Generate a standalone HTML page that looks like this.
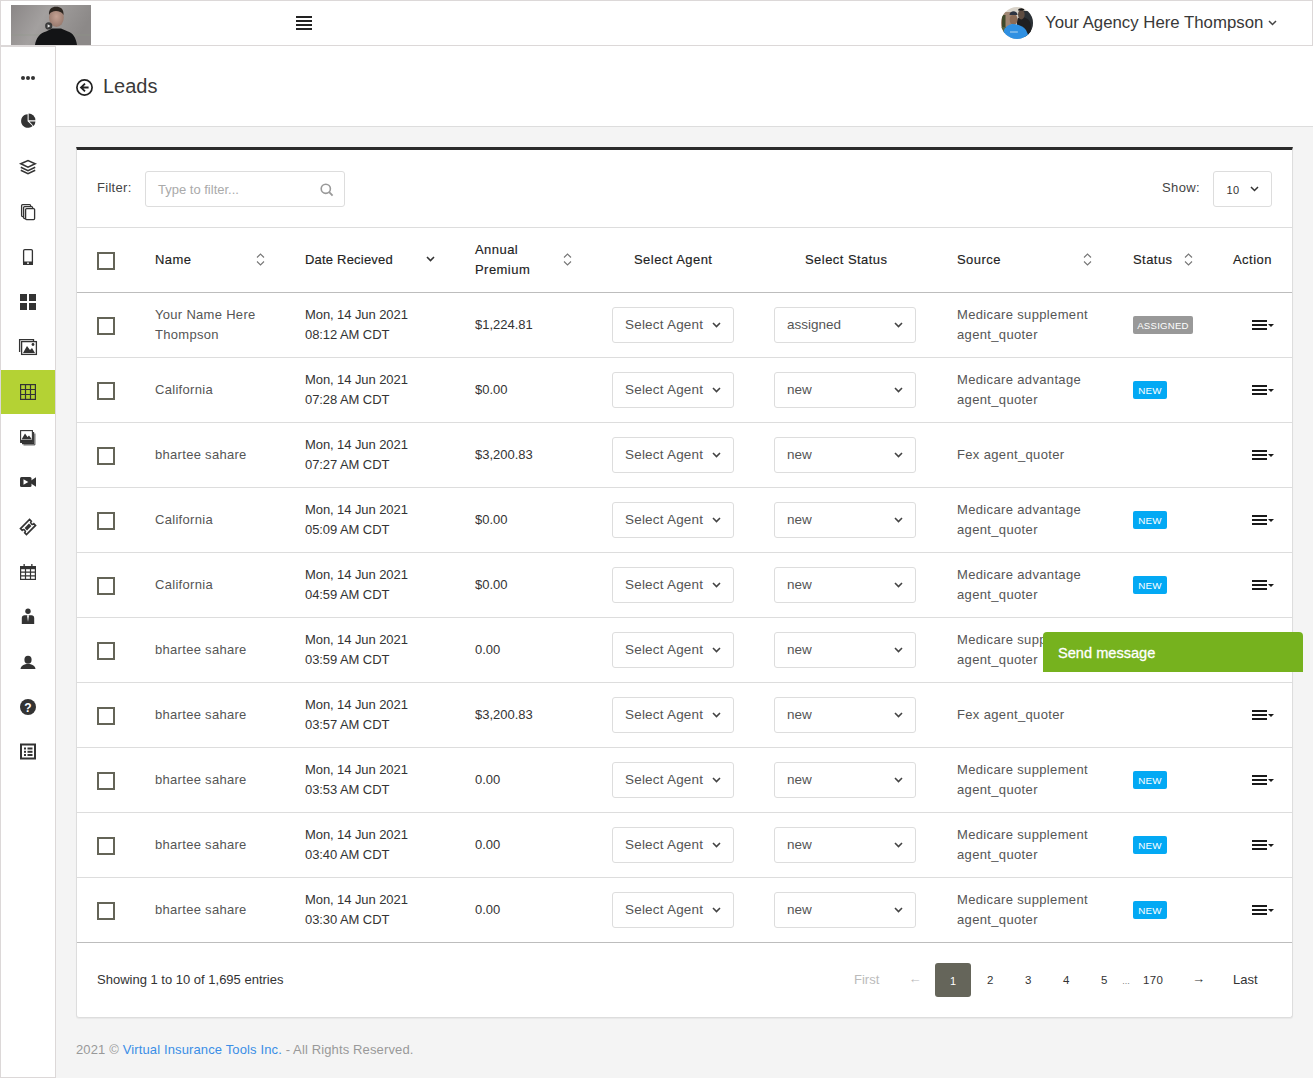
<!DOCTYPE html><html><head><meta charset="utf-8"><style>
*{box-sizing:border-box;margin:0;padding:0}
html,body{width:1313px;height:1078px;overflow:hidden}
body{background:#f4f4f4;font-family:"Liberation Sans",sans-serif;color:#333;position:relative;font-size:13px}
.a{position:absolute}
.t{position:absolute;white-space:nowrap;line-height:20px}
</style></head><body>
<div class="a" style="left:0;top:0;width:1313px;height:46px;background:#fff;border:1px solid #dcd8d8"></div>
<div class="a" style="left:0;top:46px;width:56px;height:1032px;background:#fff;border:1px solid #dcd8d8"></div>
<div class="a" style="left:1px;top:370px;width:54px;height:44px;background:#b4d234"></div>
<div class="a" style="left:56px;top:46px;width:1257px;height:81px;background:#fff;border-bottom:1px solid #ddd"></div>
<div class="a" style="left:76px;top:147px;width:1217px;height:871px;background:#fff;border:1px solid #ddd;border-top:3px solid #2b2b2b;border-radius:0 0 3px 3px;box-shadow:0 1px 1px rgba(0,0,0,.05)"></div>
<svg class="a" style="left:11px;top:5px" width="80" height="40" viewBox="0 0 80 40">
<defs><linearGradient id="lg" x1="0" x2="1" y1="0" y2="0.3"><stop offset="0" stop-color="#8a8686"/><stop offset=".45" stop-color="#a3a09f"/><stop offset="1" stop-color="#8c8988"/></linearGradient>
<radialGradient id="fc" cx=".5" cy=".45" r=".55"><stop offset="0" stop-color="#c4a193"/><stop offset="1" stop-color="#987a6e"/></radialGradient></defs>
<rect width="80" height="40" fill="url(#lg)"/>
<path d="M0 30 H80" stroke="#8f9a86" stroke-width="0.6" opacity=".6"/>
<path d="M24 40 C25 33 29 28 35 26.5 L41 23.5 L50 23.5 L57 26.5 C62 28 65 33 66 40 Z" fill="#131416"/>
<ellipse cx="45.4" cy="12.5" rx="7.4" ry="9.5" fill="url(#fc)"/>
<path d="M38 10 C37.5 4 41 1.8 45 1.8 C49.5 1.8 53 4 52.5 10 C51 7 48 6 45 6 C42 6 39.5 7 38 10Z" fill="#2c2520"/>
<circle cx="37.7" cy="20.9" r="3.6" fill="#3b3b3b"/><path d="M36.6 19.3 L39.4 21 L36.6 22.7Z" fill="#e6e6e6"/>
</svg>
<svg class="a" style="left:296px;top:16px" width="16" height="14"><rect y="0" width="16" height="2" fill="#222"/><rect y="4" width="16" height="2" fill="#222"/><rect y="8" width="16" height="2" fill="#222"/><rect y="12" width="16" height="2" fill="#222"/></svg>
<svg class="a" style="left:1001px;top:7px" width="32" height="32" viewBox="0 0 32 32">
<defs><clipPath id="av"><circle cx="16" cy="16" r="16"/></clipPath></defs>
<g clip-path="url(#av)"><rect width="32" height="32" fill="#d8d2c8"/>
<rect x="0" y="5" width="10" height="17" fill="#a08673"/>
<rect x="1" y="8" width="3.5" height="14" fill="#3f4a2a"/>
<rect x="0" y="20" width="10" height="6" fill="#5a6440"/>
<rect x="22" y="4" width="10" height="24" fill="#2a3035"/>
<path d="M16 30 V14 C16 11 18 10 20 10 C24 10 29 12 30 18 V30Z" fill="#1f1f21"/>
<ellipse cx="20.3" cy="7.5" rx="3.3" ry="5" fill="#5e4c40"/>
<path d="M17 3.5 C17 0.5 23.5 0.5 23.5 3.5Z" fill="#151515"/>
<ellipse cx="12.6" cy="12.5" rx="3.9" ry="5.5" fill="#8c6b55"/>
<path d="M8.5 8 C8.5 3 16.5 3 16.5 8 Z" fill="#2d3340"/>
<path d="M1 32 L3 23 C5 19 9 17 12 17 C16 17 22 19 25 23 L29 32Z" fill="#2f90e2"/>
<path d="M9 25 H17" stroke="#cfe4f5" stroke-width="1.2" opacity=".7"/>
</g></svg>
<div class="t" style="left:1045px;top:13px;font-size:16.8px;color:#383838;font-weight:400;line-height:20px;">Your Agency Here Thompson</div>
<svg class="a" style="left:1268px;top:20px" width="9" height="6"><path d="M1 1 L4.5 4.5 L8 1" stroke="#444" stroke-width="1.5" fill="none"/></svg>
<svg class="a" style="left:76px;top:79px" width="17" height="17" viewBox="0 0 17 17"><circle cx="8.5" cy="8.5" r="7.6" stroke="#222" stroke-width="1.7" fill="none"/><path d="M9 4.6 L5 8.5 L9 12.4 M5.2 8.5 H12.6" stroke="#222" stroke-width="1.8" fill="none"/></svg>
<div class="t" style="left:103px;top:74px;font-size:20px;color:#3a3a3a;font-weight:400;line-height:24px;">Leads</div>
<div class="t" style="left:97px;top:178px;font-size:13px;color:#444;font-weight:400;line-height:20px;letter-spacing:.3px">Filter:</div>
<div class="a" style="left:145px;top:171px;width:200px;height:36px;border:1px solid #ddd;border-radius:3px;background:#fff"></div>
<div class="t" style="left:158px;top:180px;font-size:13px;color:#aaa;font-weight:400;line-height:20px;">Type to filter...</div>
<svg class="a" style="left:320px;top:183px" width="14" height="14"><circle cx="5.8" cy="5.8" r="4.6" stroke="#999" stroke-width="1.6" fill="none"/><path d="M9.2 9.2 L12.6 12.6" stroke="#999" stroke-width="1.8"/></svg>
<div class="t" style="left:1162px;top:178px;font-size:13px;color:#444;font-weight:400;line-height:20px;letter-spacing:.4px">Show:</div>
<div class="a" style="left:1213px;top:171px;width:59px;height:36px;border:1px solid #ddd;border-radius:3px;background:#fff"></div>
<div class="t" style="left:1226.5px;top:180px;font-size:11px;color:#333;font-weight:400;line-height:20px;letter-spacing:.4px">10</div>
<svg class="a" style="left:1250px;top:186px" width="9" height="6"><path d="M1 1 L4.5 4.5 L8 1" stroke="#333" stroke-width="1.5" fill="none"/></svg>
<div class="a" style="left:77px;top:227px;width:1215px;height:1px;background:#ddd"></div>
<div class="a" style="left:77px;top:292px;width:1215px;height:1px;background:#bdbdbd"></div>
<div class="a" style="left:77px;top:357px;width:1215px;height:1px;background:#ddd"></div>
<div class="a" style="left:77px;top:422px;width:1215px;height:1px;background:#ddd"></div>
<div class="a" style="left:77px;top:487px;width:1215px;height:1px;background:#ddd"></div>
<div class="a" style="left:77px;top:552px;width:1215px;height:1px;background:#ddd"></div>
<div class="a" style="left:77px;top:617px;width:1215px;height:1px;background:#ddd"></div>
<div class="a" style="left:77px;top:682px;width:1215px;height:1px;background:#ddd"></div>
<div class="a" style="left:77px;top:747px;width:1215px;height:1px;background:#ddd"></div>
<div class="a" style="left:77px;top:812px;width:1215px;height:1px;background:#ddd"></div>
<div class="a" style="left:77px;top:877px;width:1215px;height:1px;background:#ddd"></div>
<div class="a" style="left:77px;top:942px;width:1215px;height:1px;background:#bdbdbd"></div>
<div class="a" style="left:97px;top:252px;width:18px;height:18px;border:2px solid #646457"></div>
<div class="t" style="left:155px;top:250px;font-size:13px;color:#222;font-weight:400;line-height:20px;letter-spacing:.45px;-webkit-text-stroke:.15px #222">Name</div>
<svg class="a" style="left:256px;top:253px" width="9" height="13"><path d="M1 4.5 L4.5 1 L8 4.5 M1 8.5 L4.5 12 L8 8.5" stroke="#777" stroke-width="1.1" fill="none"/></svg>
<div class="t" style="left:305px;top:250px;font-size:13px;color:#222;font-weight:400;line-height:20px;letter-spacing:.2px;-webkit-text-stroke:.15px #222">Date Recieved</div>
<svg class="a" style="left:426px;top:256px" width="9" height="6"><path d="M1 1 L4.5 4.5 L8 1" stroke="#333" stroke-width="1.6" fill="none"/></svg>
<div class="t" style="left:475px;top:240px;font-size:13px;color:#222;font-weight:400;line-height:20px;letter-spacing:.45px;-webkit-text-stroke:.15px #222">Annual<br>Premium</div>
<svg class="a" style="left:563px;top:253px" width="9" height="13"><path d="M1 4.5 L4.5 1 L8 4.5 M1 8.5 L4.5 12 L8 8.5" stroke="#777" stroke-width="1.1" fill="none"/></svg>
<div class="t" style="left:634px;top:250px;font-size:13px;color:#222;font-weight:400;line-height:20px;letter-spacing:.45px;-webkit-text-stroke:.15px #222">Select Agent</div>
<div class="t" style="left:805px;top:250px;font-size:13px;color:#222;font-weight:400;line-height:20px;letter-spacing:.45px;-webkit-text-stroke:.15px #222">Select Status</div>
<div class="t" style="left:957px;top:250px;font-size:13px;color:#222;font-weight:400;line-height:20px;letter-spacing:.45px;-webkit-text-stroke:.15px #222">Source</div>
<svg class="a" style="left:1083px;top:253px" width="9" height="13"><path d="M1 4.5 L4.5 1 L8 4.5 M1 8.5 L4.5 12 L8 8.5" stroke="#777" stroke-width="1.1" fill="none"/></svg>
<div class="t" style="left:1133px;top:250px;font-size:13px;color:#222;font-weight:400;line-height:20px;letter-spacing:.45px;-webkit-text-stroke:.15px #222">Status</div>
<svg class="a" style="left:1184px;top:253px" width="9" height="13"><path d="M1 4.5 L4.5 1 L8 4.5 M1 8.5 L4.5 12 L8 8.5" stroke="#777" stroke-width="1.1" fill="none"/></svg>
<div class="t" style="left:1233px;top:250px;font-size:13px;color:#222;font-weight:400;line-height:20px;letter-spacing:.45px;-webkit-text-stroke:.15px #222">Action</div>
<div class="a" style="left:97px;top:317px;width:18px;height:18px;border:2px solid #646457"></div>
<div class="t" style="left:155px;top:305px;font-size:13px;color:#555;font-weight:400;line-height:20px;letter-spacing:.3px">Your Name Here<br>Thompson</div>
<div class="t" style="left:305px;top:305px;font-size:13px;color:#333;font-weight:400;line-height:20px;letter-spacing:-.08px">Mon, 14 Jun 2021<br>08:12 AM CDT</div>
<div class="t" style="left:475px;top:315px;font-size:13px;color:#333;font-weight:400;line-height:20px;">$1,224.81</div>
<div class="a" style="left:612px;top:307px;width:122px;height:36px;border:1px solid #ddd;border-radius:3px;background:#fff"></div>
<div class="t" style="left:625px;top:315px;font-size:13.5px;color:#555;font-weight:400;line-height:20px;letter-spacing:.2px">Select Agent</div>
<svg class="a" style="left:712px;top:322px" width="9" height="6"><path d="M1 1 L4.5 4.5 L8 1" stroke="#444" stroke-width="1.6" fill="none"/></svg>
<div class="a" style="left:774px;top:307px;width:142px;height:36px;border:1px solid #ddd;border-radius:3px;background:#fff"></div>
<div class="t" style="left:787px;top:315px;font-size:13.5px;color:#555;font-weight:400;line-height:20px;">assigned</div>
<svg class="a" style="left:894px;top:322px" width="9" height="6"><path d="M1 1 L4.5 4.5 L8 1" stroke="#444" stroke-width="1.6" fill="none"/></svg>
<div class="t" style="left:957px;top:305px;font-size:13px;color:#555;font-weight:400;line-height:20px;letter-spacing:.35px">Medicare supplement<br>agent_quoter</div>
<div class="a" style="left:1133px;top:316px;width:60px;height:18px;border-radius:2px;background:#999;color:#fff;font-size:9.6px;line-height:20px;letter-spacing:.25px;text-align:center">ASSIGNED</div>
<svg class="a" style="left:1252px;top:320px" width="23" height="11"><rect x="0" y="0" width="15" height="2" fill="#1a1a1a"/><rect x="0" y="4" width="15" height="2" fill="#1a1a1a"/><rect x="0" y="8" width="15" height="2" fill="#1a1a1a"/><path d="M16 4 L22 4 L19 7Z" fill="#1a1a1a"/></svg>
<div class="a" style="left:97px;top:382px;width:18px;height:18px;border:2px solid #646457"></div>
<div class="t" style="left:155px;top:380px;font-size:13px;color:#555;font-weight:400;line-height:20px;letter-spacing:.3px">California</div>
<div class="t" style="left:305px;top:370px;font-size:13px;color:#333;font-weight:400;line-height:20px;letter-spacing:-.08px">Mon, 14 Jun 2021<br>07:28 AM CDT</div>
<div class="t" style="left:475px;top:380px;font-size:13px;color:#333;font-weight:400;line-height:20px;">$0.00</div>
<div class="a" style="left:612px;top:372px;width:122px;height:36px;border:1px solid #ddd;border-radius:3px;background:#fff"></div>
<div class="t" style="left:625px;top:380px;font-size:13.5px;color:#555;font-weight:400;line-height:20px;letter-spacing:.2px">Select Agent</div>
<svg class="a" style="left:712px;top:387px" width="9" height="6"><path d="M1 1 L4.5 4.5 L8 1" stroke="#444" stroke-width="1.6" fill="none"/></svg>
<div class="a" style="left:774px;top:372px;width:142px;height:36px;border:1px solid #ddd;border-radius:3px;background:#fff"></div>
<div class="t" style="left:787px;top:380px;font-size:13.5px;color:#555;font-weight:400;line-height:20px;">new</div>
<svg class="a" style="left:894px;top:387px" width="9" height="6"><path d="M1 1 L4.5 4.5 L8 1" stroke="#444" stroke-width="1.6" fill="none"/></svg>
<div class="t" style="left:957px;top:370px;font-size:13px;color:#555;font-weight:400;line-height:20px;letter-spacing:.35px">Medicare advantage<br>agent_quoter</div>
<div class="a" style="left:1133px;top:381px;width:34px;height:18px;border-radius:2px;background:#03a9f4;color:#fff;font-size:9.8px;line-height:20px;letter-spacing:.2px;text-align:center">NEW</div>
<svg class="a" style="left:1252px;top:385px" width="23" height="11"><rect x="0" y="0" width="15" height="2" fill="#1a1a1a"/><rect x="0" y="4" width="15" height="2" fill="#1a1a1a"/><rect x="0" y="8" width="15" height="2" fill="#1a1a1a"/><path d="M16 4 L22 4 L19 7Z" fill="#1a1a1a"/></svg>
<div class="a" style="left:97px;top:447px;width:18px;height:18px;border:2px solid #646457"></div>
<div class="t" style="left:155px;top:445px;font-size:13px;color:#555;font-weight:400;line-height:20px;letter-spacing:.3px">bhartee sahare</div>
<div class="t" style="left:305px;top:435px;font-size:13px;color:#333;font-weight:400;line-height:20px;letter-spacing:-.08px">Mon, 14 Jun 2021<br>07:27 AM CDT</div>
<div class="t" style="left:475px;top:445px;font-size:13px;color:#333;font-weight:400;line-height:20px;">$3,200.83</div>
<div class="a" style="left:612px;top:437px;width:122px;height:36px;border:1px solid #ddd;border-radius:3px;background:#fff"></div>
<div class="t" style="left:625px;top:445px;font-size:13.5px;color:#555;font-weight:400;line-height:20px;letter-spacing:.2px">Select Agent</div>
<svg class="a" style="left:712px;top:452px" width="9" height="6"><path d="M1 1 L4.5 4.5 L8 1" stroke="#444" stroke-width="1.6" fill="none"/></svg>
<div class="a" style="left:774px;top:437px;width:142px;height:36px;border:1px solid #ddd;border-radius:3px;background:#fff"></div>
<div class="t" style="left:787px;top:445px;font-size:13.5px;color:#555;font-weight:400;line-height:20px;">new</div>
<svg class="a" style="left:894px;top:452px" width="9" height="6"><path d="M1 1 L4.5 4.5 L8 1" stroke="#444" stroke-width="1.6" fill="none"/></svg>
<div class="t" style="left:957px;top:445px;font-size:13px;color:#555;font-weight:400;line-height:20px;letter-spacing:.35px">Fex agent_quoter</div>
<svg class="a" style="left:1252px;top:450px" width="23" height="11"><rect x="0" y="0" width="15" height="2" fill="#1a1a1a"/><rect x="0" y="4" width="15" height="2" fill="#1a1a1a"/><rect x="0" y="8" width="15" height="2" fill="#1a1a1a"/><path d="M16 4 L22 4 L19 7Z" fill="#1a1a1a"/></svg>
<div class="a" style="left:97px;top:512px;width:18px;height:18px;border:2px solid #646457"></div>
<div class="t" style="left:155px;top:510px;font-size:13px;color:#555;font-weight:400;line-height:20px;letter-spacing:.3px">California</div>
<div class="t" style="left:305px;top:500px;font-size:13px;color:#333;font-weight:400;line-height:20px;letter-spacing:-.08px">Mon, 14 Jun 2021<br>05:09 AM CDT</div>
<div class="t" style="left:475px;top:510px;font-size:13px;color:#333;font-weight:400;line-height:20px;">$0.00</div>
<div class="a" style="left:612px;top:502px;width:122px;height:36px;border:1px solid #ddd;border-radius:3px;background:#fff"></div>
<div class="t" style="left:625px;top:510px;font-size:13.5px;color:#555;font-weight:400;line-height:20px;letter-spacing:.2px">Select Agent</div>
<svg class="a" style="left:712px;top:517px" width="9" height="6"><path d="M1 1 L4.5 4.5 L8 1" stroke="#444" stroke-width="1.6" fill="none"/></svg>
<div class="a" style="left:774px;top:502px;width:142px;height:36px;border:1px solid #ddd;border-radius:3px;background:#fff"></div>
<div class="t" style="left:787px;top:510px;font-size:13.5px;color:#555;font-weight:400;line-height:20px;">new</div>
<svg class="a" style="left:894px;top:517px" width="9" height="6"><path d="M1 1 L4.5 4.5 L8 1" stroke="#444" stroke-width="1.6" fill="none"/></svg>
<div class="t" style="left:957px;top:500px;font-size:13px;color:#555;font-weight:400;line-height:20px;letter-spacing:.35px">Medicare advantage<br>agent_quoter</div>
<div class="a" style="left:1133px;top:511px;width:34px;height:18px;border-radius:2px;background:#03a9f4;color:#fff;font-size:9.8px;line-height:20px;letter-spacing:.2px;text-align:center">NEW</div>
<svg class="a" style="left:1252px;top:515px" width="23" height="11"><rect x="0" y="0" width="15" height="2" fill="#1a1a1a"/><rect x="0" y="4" width="15" height="2" fill="#1a1a1a"/><rect x="0" y="8" width="15" height="2" fill="#1a1a1a"/><path d="M16 4 L22 4 L19 7Z" fill="#1a1a1a"/></svg>
<div class="a" style="left:97px;top:577px;width:18px;height:18px;border:2px solid #646457"></div>
<div class="t" style="left:155px;top:575px;font-size:13px;color:#555;font-weight:400;line-height:20px;letter-spacing:.3px">California</div>
<div class="t" style="left:305px;top:565px;font-size:13px;color:#333;font-weight:400;line-height:20px;letter-spacing:-.08px">Mon, 14 Jun 2021<br>04:59 AM CDT</div>
<div class="t" style="left:475px;top:575px;font-size:13px;color:#333;font-weight:400;line-height:20px;">$0.00</div>
<div class="a" style="left:612px;top:567px;width:122px;height:36px;border:1px solid #ddd;border-radius:3px;background:#fff"></div>
<div class="t" style="left:625px;top:575px;font-size:13.5px;color:#555;font-weight:400;line-height:20px;letter-spacing:.2px">Select Agent</div>
<svg class="a" style="left:712px;top:582px" width="9" height="6"><path d="M1 1 L4.5 4.5 L8 1" stroke="#444" stroke-width="1.6" fill="none"/></svg>
<div class="a" style="left:774px;top:567px;width:142px;height:36px;border:1px solid #ddd;border-radius:3px;background:#fff"></div>
<div class="t" style="left:787px;top:575px;font-size:13.5px;color:#555;font-weight:400;line-height:20px;">new</div>
<svg class="a" style="left:894px;top:582px" width="9" height="6"><path d="M1 1 L4.5 4.5 L8 1" stroke="#444" stroke-width="1.6" fill="none"/></svg>
<div class="t" style="left:957px;top:565px;font-size:13px;color:#555;font-weight:400;line-height:20px;letter-spacing:.35px">Medicare advantage<br>agent_quoter</div>
<div class="a" style="left:1133px;top:576px;width:34px;height:18px;border-radius:2px;background:#03a9f4;color:#fff;font-size:9.8px;line-height:20px;letter-spacing:.2px;text-align:center">NEW</div>
<svg class="a" style="left:1252px;top:580px" width="23" height="11"><rect x="0" y="0" width="15" height="2" fill="#1a1a1a"/><rect x="0" y="4" width="15" height="2" fill="#1a1a1a"/><rect x="0" y="8" width="15" height="2" fill="#1a1a1a"/><path d="M16 4 L22 4 L19 7Z" fill="#1a1a1a"/></svg>
<div class="a" style="left:97px;top:642px;width:18px;height:18px;border:2px solid #646457"></div>
<div class="t" style="left:155px;top:640px;font-size:13px;color:#555;font-weight:400;line-height:20px;letter-spacing:.3px">bhartee sahare</div>
<div class="t" style="left:305px;top:630px;font-size:13px;color:#333;font-weight:400;line-height:20px;letter-spacing:-.08px">Mon, 14 Jun 2021<br>03:59 AM CDT</div>
<div class="t" style="left:475px;top:640px;font-size:13px;color:#333;font-weight:400;line-height:20px;">0.00</div>
<div class="a" style="left:612px;top:632px;width:122px;height:36px;border:1px solid #ddd;border-radius:3px;background:#fff"></div>
<div class="t" style="left:625px;top:640px;font-size:13.5px;color:#555;font-weight:400;line-height:20px;letter-spacing:.2px">Select Agent</div>
<svg class="a" style="left:712px;top:647px" width="9" height="6"><path d="M1 1 L4.5 4.5 L8 1" stroke="#444" stroke-width="1.6" fill="none"/></svg>
<div class="a" style="left:774px;top:632px;width:142px;height:36px;border:1px solid #ddd;border-radius:3px;background:#fff"></div>
<div class="t" style="left:787px;top:640px;font-size:13.5px;color:#555;font-weight:400;line-height:20px;">new</div>
<svg class="a" style="left:894px;top:647px" width="9" height="6"><path d="M1 1 L4.5 4.5 L8 1" stroke="#444" stroke-width="1.6" fill="none"/></svg>
<div class="t" style="left:957px;top:630px;font-size:13px;color:#555;font-weight:400;line-height:20px;letter-spacing:.35px">Medicare supplement<br>agent_quoter</div>
<div class="a" style="left:1133px;top:641px;width:34px;height:18px;border-radius:2px;background:#03a9f4;color:#fff;font-size:9.8px;line-height:20px;letter-spacing:.2px;text-align:center">NEW</div>
<svg class="a" style="left:1252px;top:645px" width="23" height="11"><rect x="0" y="0" width="15" height="2" fill="#1a1a1a"/><rect x="0" y="4" width="15" height="2" fill="#1a1a1a"/><rect x="0" y="8" width="15" height="2" fill="#1a1a1a"/><path d="M16 4 L22 4 L19 7Z" fill="#1a1a1a"/></svg>
<div class="a" style="left:97px;top:707px;width:18px;height:18px;border:2px solid #646457"></div>
<div class="t" style="left:155px;top:705px;font-size:13px;color:#555;font-weight:400;line-height:20px;letter-spacing:.3px">bhartee sahare</div>
<div class="t" style="left:305px;top:695px;font-size:13px;color:#333;font-weight:400;line-height:20px;letter-spacing:-.08px">Mon, 14 Jun 2021<br>03:57 AM CDT</div>
<div class="t" style="left:475px;top:705px;font-size:13px;color:#333;font-weight:400;line-height:20px;">$3,200.83</div>
<div class="a" style="left:612px;top:697px;width:122px;height:36px;border:1px solid #ddd;border-radius:3px;background:#fff"></div>
<div class="t" style="left:625px;top:705px;font-size:13.5px;color:#555;font-weight:400;line-height:20px;letter-spacing:.2px">Select Agent</div>
<svg class="a" style="left:712px;top:712px" width="9" height="6"><path d="M1 1 L4.5 4.5 L8 1" stroke="#444" stroke-width="1.6" fill="none"/></svg>
<div class="a" style="left:774px;top:697px;width:142px;height:36px;border:1px solid #ddd;border-radius:3px;background:#fff"></div>
<div class="t" style="left:787px;top:705px;font-size:13.5px;color:#555;font-weight:400;line-height:20px;">new</div>
<svg class="a" style="left:894px;top:712px" width="9" height="6"><path d="M1 1 L4.5 4.5 L8 1" stroke="#444" stroke-width="1.6" fill="none"/></svg>
<div class="t" style="left:957px;top:705px;font-size:13px;color:#555;font-weight:400;line-height:20px;letter-spacing:.35px">Fex agent_quoter</div>
<svg class="a" style="left:1252px;top:710px" width="23" height="11"><rect x="0" y="0" width="15" height="2" fill="#1a1a1a"/><rect x="0" y="4" width="15" height="2" fill="#1a1a1a"/><rect x="0" y="8" width="15" height="2" fill="#1a1a1a"/><path d="M16 4 L22 4 L19 7Z" fill="#1a1a1a"/></svg>
<div class="a" style="left:97px;top:772px;width:18px;height:18px;border:2px solid #646457"></div>
<div class="t" style="left:155px;top:770px;font-size:13px;color:#555;font-weight:400;line-height:20px;letter-spacing:.3px">bhartee sahare</div>
<div class="t" style="left:305px;top:760px;font-size:13px;color:#333;font-weight:400;line-height:20px;letter-spacing:-.08px">Mon, 14 Jun 2021<br>03:53 AM CDT</div>
<div class="t" style="left:475px;top:770px;font-size:13px;color:#333;font-weight:400;line-height:20px;">0.00</div>
<div class="a" style="left:612px;top:762px;width:122px;height:36px;border:1px solid #ddd;border-radius:3px;background:#fff"></div>
<div class="t" style="left:625px;top:770px;font-size:13.5px;color:#555;font-weight:400;line-height:20px;letter-spacing:.2px">Select Agent</div>
<svg class="a" style="left:712px;top:777px" width="9" height="6"><path d="M1 1 L4.5 4.5 L8 1" stroke="#444" stroke-width="1.6" fill="none"/></svg>
<div class="a" style="left:774px;top:762px;width:142px;height:36px;border:1px solid #ddd;border-radius:3px;background:#fff"></div>
<div class="t" style="left:787px;top:770px;font-size:13.5px;color:#555;font-weight:400;line-height:20px;">new</div>
<svg class="a" style="left:894px;top:777px" width="9" height="6"><path d="M1 1 L4.5 4.5 L8 1" stroke="#444" stroke-width="1.6" fill="none"/></svg>
<div class="t" style="left:957px;top:760px;font-size:13px;color:#555;font-weight:400;line-height:20px;letter-spacing:.35px">Medicare supplement<br>agent_quoter</div>
<div class="a" style="left:1133px;top:771px;width:34px;height:18px;border-radius:2px;background:#03a9f4;color:#fff;font-size:9.8px;line-height:20px;letter-spacing:.2px;text-align:center">NEW</div>
<svg class="a" style="left:1252px;top:775px" width="23" height="11"><rect x="0" y="0" width="15" height="2" fill="#1a1a1a"/><rect x="0" y="4" width="15" height="2" fill="#1a1a1a"/><rect x="0" y="8" width="15" height="2" fill="#1a1a1a"/><path d="M16 4 L22 4 L19 7Z" fill="#1a1a1a"/></svg>
<div class="a" style="left:97px;top:837px;width:18px;height:18px;border:2px solid #646457"></div>
<div class="t" style="left:155px;top:835px;font-size:13px;color:#555;font-weight:400;line-height:20px;letter-spacing:.3px">bhartee sahare</div>
<div class="t" style="left:305px;top:825px;font-size:13px;color:#333;font-weight:400;line-height:20px;letter-spacing:-.08px">Mon, 14 Jun 2021<br>03:40 AM CDT</div>
<div class="t" style="left:475px;top:835px;font-size:13px;color:#333;font-weight:400;line-height:20px;">0.00</div>
<div class="a" style="left:612px;top:827px;width:122px;height:36px;border:1px solid #ddd;border-radius:3px;background:#fff"></div>
<div class="t" style="left:625px;top:835px;font-size:13.5px;color:#555;font-weight:400;line-height:20px;letter-spacing:.2px">Select Agent</div>
<svg class="a" style="left:712px;top:842px" width="9" height="6"><path d="M1 1 L4.5 4.5 L8 1" stroke="#444" stroke-width="1.6" fill="none"/></svg>
<div class="a" style="left:774px;top:827px;width:142px;height:36px;border:1px solid #ddd;border-radius:3px;background:#fff"></div>
<div class="t" style="left:787px;top:835px;font-size:13.5px;color:#555;font-weight:400;line-height:20px;">new</div>
<svg class="a" style="left:894px;top:842px" width="9" height="6"><path d="M1 1 L4.5 4.5 L8 1" stroke="#444" stroke-width="1.6" fill="none"/></svg>
<div class="t" style="left:957px;top:825px;font-size:13px;color:#555;font-weight:400;line-height:20px;letter-spacing:.35px">Medicare supplement<br>agent_quoter</div>
<div class="a" style="left:1133px;top:836px;width:34px;height:18px;border-radius:2px;background:#03a9f4;color:#fff;font-size:9.8px;line-height:20px;letter-spacing:.2px;text-align:center">NEW</div>
<svg class="a" style="left:1252px;top:840px" width="23" height="11"><rect x="0" y="0" width="15" height="2" fill="#1a1a1a"/><rect x="0" y="4" width="15" height="2" fill="#1a1a1a"/><rect x="0" y="8" width="15" height="2" fill="#1a1a1a"/><path d="M16 4 L22 4 L19 7Z" fill="#1a1a1a"/></svg>
<div class="a" style="left:97px;top:902px;width:18px;height:18px;border:2px solid #646457"></div>
<div class="t" style="left:155px;top:900px;font-size:13px;color:#555;font-weight:400;line-height:20px;letter-spacing:.3px">bhartee sahare</div>
<div class="t" style="left:305px;top:890px;font-size:13px;color:#333;font-weight:400;line-height:20px;letter-spacing:-.08px">Mon, 14 Jun 2021<br>03:30 AM CDT</div>
<div class="t" style="left:475px;top:900px;font-size:13px;color:#333;font-weight:400;line-height:20px;">0.00</div>
<div class="a" style="left:612px;top:892px;width:122px;height:36px;border:1px solid #ddd;border-radius:3px;background:#fff"></div>
<div class="t" style="left:625px;top:900px;font-size:13.5px;color:#555;font-weight:400;line-height:20px;letter-spacing:.2px">Select Agent</div>
<svg class="a" style="left:712px;top:907px" width="9" height="6"><path d="M1 1 L4.5 4.5 L8 1" stroke="#444" stroke-width="1.6" fill="none"/></svg>
<div class="a" style="left:774px;top:892px;width:142px;height:36px;border:1px solid #ddd;border-radius:3px;background:#fff"></div>
<div class="t" style="left:787px;top:900px;font-size:13.5px;color:#555;font-weight:400;line-height:20px;">new</div>
<svg class="a" style="left:894px;top:907px" width="9" height="6"><path d="M1 1 L4.5 4.5 L8 1" stroke="#444" stroke-width="1.6" fill="none"/></svg>
<div class="t" style="left:957px;top:890px;font-size:13px;color:#555;font-weight:400;line-height:20px;letter-spacing:.35px">Medicare supplement<br>agent_quoter</div>
<div class="a" style="left:1133px;top:901px;width:34px;height:18px;border-radius:2px;background:#03a9f4;color:#fff;font-size:9.8px;line-height:20px;letter-spacing:.2px;text-align:center">NEW</div>
<svg class="a" style="left:1252px;top:905px" width="23" height="11"><rect x="0" y="0" width="15" height="2" fill="#1a1a1a"/><rect x="0" y="4" width="15" height="2" fill="#1a1a1a"/><rect x="0" y="8" width="15" height="2" fill="#1a1a1a"/><path d="M16 4 L22 4 L19 7Z" fill="#1a1a1a"/></svg>
<div class="t" style="left:97px;top:970px;font-size:13px;color:#333;font-weight:400;line-height:20px;">Showing 1 to 10 of 1,695 entries</div>
<div class="t" style="left:854px;top:970px;font-size:13px;color:#bbb;font-weight:400;line-height:20px;">First</div>
<div class="t" style="left:908.5px;top:969px;font-size:13px;color:#bbb;font-weight:400;line-height:20px;">&larr;</div>
<div class="a" style="left:935px;top:963px;width:36px;height:34px;border-radius:3px;background:#65655a;color:#fff;font-size:11px;line-height:36px;text-align:center">1</div>
<div class="t" style="left:987px;top:970px;font-size:11.5px;color:#333;font-weight:400;line-height:20px;letter-spacing:.3px">2</div>
<div class="t" style="left:1025px;top:970px;font-size:11.5px;color:#333;font-weight:400;line-height:20px;letter-spacing:.3px">3</div>
<div class="t" style="left:1063px;top:970px;font-size:11.5px;color:#333;font-weight:400;line-height:20px;letter-spacing:.3px">4</div>
<div class="t" style="left:1101px;top:970px;font-size:11.5px;color:#333;font-weight:400;line-height:20px;letter-spacing:.3px">5</div>
<div class="t" style="left:1143px;top:970px;font-size:11.5px;color:#333;font-weight:400;line-height:20px;letter-spacing:.3px">170</div>
<div class="t" style="left:1122px;top:972px;font-size:8px;color:#333;font-weight:400;line-height:20px;">&hellip;</div>
<div class="t" style="left:1192px;top:969px;font-size:13px;color:#333;font-weight:400;line-height:20px;">&rarr;</div>
<div class="t" style="left:1233px;top:970px;font-size:13px;color:#333;font-weight:400;line-height:20px;">Last</div>
<div class="t" style="left:76px;top:1040px;font-size:13px;color:#999;font-weight:400;line-height:20px;letter-spacing:.13px">2021 &copy; <span style="color:#3a8ee6">Virtual Insurance Tools Inc.</span> - All Rights Reserved.</div>
<div class="a" style="left:1043px;top:632px;width:260px;height:40px;background:#76b21e;border-radius:4px 4px 0 0"></div>
<div class="t" style="left:1058px;top:643px;font-size:14.6px;color:#fff;font-weight:400;line-height:20px;-webkit-text-stroke:.3px #fff">Send message</div>
<svg class="a" style="left:0;top:0" width="56" height="800" viewBox="0 0 56 800">
<g fill="#333" stroke="none">
<circle cx="23" cy="78" r="2"/><circle cx="28" cy="78" r="2"/><circle cx="33" cy="78" r="2"/>
<path d="M27.6 121.2 V114.2 A6.8 6.8 0 1 0 32.6 125.9 Z"/><path d="M28.6 120.3 V113.5 A6.8 6.8 0 0 1 35.4 120.3 Z"/><path d="M29.4 121.5 H35.4 A6.8 6.8 0 0 1 33.6 126 Z"/>
</g>
<g fill="none" stroke="#333" stroke-width="1.5">
<path d="M20.8 163.8 L28 160.5 L35.2 163.8 L28 167.1 Z"/><path d="M20.8 167.3 L28 170.6 L35.2 167.3"/><path d="M20.8 170.3 L28 173.6 L35.2 170.3"/>
<rect x="21.6" y="204.6" width="9" height="12" rx="1" fill="#fff" stroke-width="1.3"/><rect x="23.6" y="206.6" width="9" height="12" rx="1" fill="#fff" stroke-width="1.3"/><rect x="25.6" y="208.6" width="9" height="11" rx="1" fill="#fff" stroke-width="1.3"/>
<rect x="23.6" y="249.6" width="8.8" height="14.8" rx="1.2" stroke-width="1.3"/>
</g>
<g fill="#333">
<rect x="23" y="261.5" width="10" height="3.5"/><circle cx="28" cy="263.2" r="0.9" fill="#fff"/>
<rect x="20" y="294" width="7" height="7"/><rect x="29" y="294" width="7" height="7"/><rect x="20" y="303" width="7" height="7"/><rect x="29" y="303" width="7" height="7"/>
</g>
<g fill="none" stroke="#333" stroke-width="1.3"><path d="M19.6 352 V339.6 H33.5 V341"/><rect x="21.6" y="341.6" width="14.8" height="12.8" fill="#fff"/></g>
<path d="M23 353 L27 346 L30 350 L32 348 L35 353 Z" fill="#333"/><circle cx="33" cy="344.5" r="1.4" fill="#333"/>
<g fill="none" stroke="#333" stroke-width="1.2"><rect x="20.6" y="384.6" width="14.8" height="14.8"/><path d="M25.5 385 V399 M30.5 385 V399 M21 389.5 H35 M21 394.5 H35"/></g>
<g fill="none" stroke="#333" stroke-width="1.1"><rect x="20.6" y="430.6" width="11.8" height="11.8"/><path d="M33.6 432 V443.6 H22"/><path d="M34.9 433.5 V444.9 H23.5" stroke-width="0.9"/></g>
<path d="M21.5 439.5 L25 433.5 L27.5 437 L29 435.5 L32 439.5 Z M21 440 H32.5 V442.5 H21Z" fill="#333"/>
<rect x="20" y="477" width="11.5" height="10" rx="1.5" fill="#333"/><path d="M31 480.5 L36 477.2 V486.8 L31 483.5Z" fill="#333"/><path d="M23.5 479.3 L28.3 482 L23.5 484.7Z" fill="#fff"/>
<g transform="rotate(-45 28 527)"><path d="M21.6 522.8 H34.4 V525.2 A1.8 1.8 0 0 0 34.4 528.8 V531.2 H21.6 V528.8 A1.8 1.8 0 0 0 21.6 525.2 Z" fill="none" stroke="#333" stroke-width="1.7"/><rect x="24.9" y="525.3" width="6.2" height="3.4" fill="#333"/></g>
<rect x="20" y="566" width="16" height="3" fill="#333"/><rect x="23.5" y="564" width="1.3" height="3" fill="#333"/><rect x="31.2" y="564" width="1.3" height="3" fill="#333"/>
<g fill="none" stroke="#333" stroke-width="1.2"><rect x="20.6" y="568.6" width="14.8" height="10.8"/><path d="M25.5 569 V579 M30.5 569 V579 M21 572.2 H35 M21 575.8 H35"/></g>
<circle cx="28" cy="611.3" r="2.7" fill="#333"/><path d="M21.8 624 V618 C21.8 616.3 23 615.3 24.5 615.3 H31.5 C33 615.3 34.2 616.3 34.2 618 V624 Z" fill="#333"/><path d="M27 615.3 L28 622 L29 615.3Z" fill="#fff"/>
<ellipse cx="28" cy="659.8" rx="3.6" ry="4" fill="#333"/><path d="M20.5 669 C21 665.5 24 664 28 664 C32 664 35 665.5 35.5 669 Z" fill="#333"/>
<circle cx="28" cy="707" r="8" fill="#333"/><text x="28" y="711.5" font-family="Liberation Sans" font-weight="700" font-size="12" fill="#fff" text-anchor="middle">?</text>
<rect x="21" y="744.5" width="14" height="14" fill="none" stroke="#333" stroke-width="2"/><g fill="#333"><rect x="24" y="747.5" width="2" height="2"/><rect x="24" y="750.8" width="2" height="2"/><rect x="24" y="754" width="2" height="2"/><rect x="27.5" y="747.5" width="5" height="2"/><rect x="27.5" y="750.8" width="5" height="2"/><rect x="27.5" y="754" width="5" height="2"/></g>
</svg>
</body></html>
